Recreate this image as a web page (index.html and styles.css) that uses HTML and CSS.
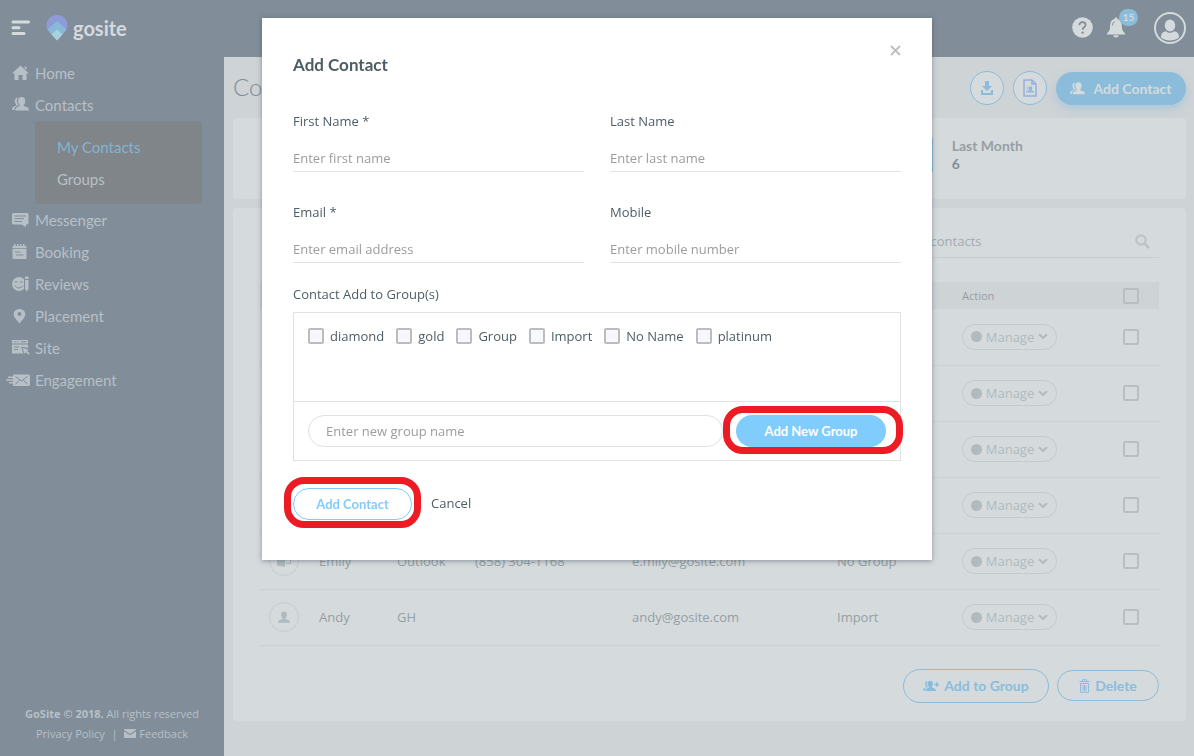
FILE: index.html
```
<!DOCTYPE html>
<html lang="en">
<head>
    <meta charset="UTF-8">
    <meta name="viewport" content="width=device-width, initial-scale=1.0">
    <title>GoSite - Contacts</title>
    <link rel="stylesheet" href="styles.css">
</head>
<body>
    <!-- Shared icons -->
    <svg class="sprite" aria-hidden="true">
        <symbol id="people" viewBox="0 0 17 14">
            <path d="M6 0.6C3.400 0.600 2.600 2.500 2.900 4.600C3 6 3.600 7 4.300 7.800V8.600L1.500 9.800C0.500 10.300 0 11.400 0 13H2.300C2.400 11 3.200 9.700 4.800 9L6.600 8.200C4.500 5.600 4.200 2.600 6 0.600Z"/>
            <path d="M9.600 0C12.300 0 13.400 2 13.200 4.300C13.100 5.900 12.500 7.200 11.700 8V9L15.300 10.300C16.400 10.800 17 12 17 13.500H3.200C3.200 12 3.700 10.800 4.800 10.300L7.700 9V8C6.800 7.200 6.200 5.900 6.100 4.300C5.900 2 7 0 9.600 0Z"/>
        </symbol>
        <symbol id="person" viewBox="0 0 14 14">
            <path d="M7 0C9.400 0 10.500 1.800 10.400 4C10.300 6 9.500 7.300 8.600 7.900V8.800L12 9.900C13.300 10.400 14 11.500 14 13.200H0C0 11.500 0.700 10.400 2 9.900L5.400 8.800V7.900C4.500 7.300 3.700 6 3.600 4C3.500 1.800 4.600 0 7 0Z"/>
        </symbol>
        <symbol id="chevron" viewBox="0 0 10 7">
            <path d="M1 1.300L5 5L9 1.300" fill="none" stroke="currentColor" stroke-width="2"/>
        </symbol>
    </svg>

    <header class="topbar">
        <button type="button" class="icon-button" aria-label="Menu">
            <svg width="20" height="16" viewBox="0 0 20 16"><path d="M2 2H17.500M2 7.800H8M2 13.600H13" stroke="currentColor" stroke-width="3" stroke-linecap="round"/></svg>
        </button>
        <a href="#" class="logo">
            <svg width="22" height="26" viewBox="0 0 22 26">
                <path d="M11 0C5 0 0.500 4.600 0.500 10.300C0.500 13.200 1.500 15 3.200 17L11 25.500L18.800 17C20.500 15 21.500 13.200 21.500 10.300C21.500 4.600 17 0 11 0Z" fill="#8f9ad9"/>
                <path d="M11 6L1.500 14.500L11 25.500L20.500 14.500Z" fill="#89b9da"/>
                <path d="M11 14.500L5.500 19.500L11 25.500L16.500 19.500Z" fill="#a7d2da"/>
            </svg>
            <span>gosite</span>
        </a>
        <div class="topbar-tools">
            <button type="button" class="icon-button" aria-label="Help">
                <svg width="21" height="21" viewBox="0 0 21 21"><circle cx="10.500" cy="10.500" r="10.300" fill="currentColor"/><path d="M7.400 8.200C7.400 6.300 8.700 5.200 10.500 5.200S13.600 6.300 13.600 8C13.600 10.300 10.600 10.300 10.600 12.800" fill="none" stroke="#818d99" stroke-width="1.700"/><circle cx="10.600" cy="15.600" r="1.200" fill="#818d99"/></svg>
            </button>
            <button type="button" class="icon-button bell" aria-label="Notifications">
                <svg width="18" height="21" viewBox="0 0 18 21"><path d="M9 0.500C9.900 0.500 10.500 1.100 10.500 2C13.300 2.600 14.700 4.900 14.800 8C14.900 12.500 15.600 14.500 18 16.200V17.500H0V16.200C2.400 14.500 3.100 12.500 3.200 8C3.300 4.900 4.700 2.600 7.500 2C7.500 1.100 8.100 0.500 9 0.500Z" fill="currentColor"/><path d="M6.300 18.300H11.700C11.400 19.800 10.400 20.500 9 20.500S6.600 19.800 6.300 18.300Z" fill="currentColor"/><path d="M5.400 8.500C5.500 6.500 6.300 5.200 7.800 4.600" fill="none" stroke="#818d99"/></svg>
                <span class="badge">15</span>
            </button>
            <button type="button" class="icon-button" aria-label="Account">
                <svg width="32" height="32" viewBox="0 0 32 32"><circle cx="16" cy="16" r="15" fill="none" stroke="currentColor" stroke-width="2"/><ellipse cx="16" cy="13.500" rx="5.200" ry="6" fill="currentColor"/><path d="M7 25.500C7 21.500 8.500 19.800 12 19.200C14.500 21.300 17.500 21.300 20 19.200C23.500 19.800 25 21.500 25 25.500C20.500 29.500 11.500 29.500 7 25.500Z" fill="currentColor"/></svg>
            </button>
        </div>
    </header>

    <div class="layout">
        <aside class="sidebar">
            <nav>
                <a href="#" class="nav-link">
                    <svg viewBox="0 0 24 18"><path d="M14.500 1.500L23 9.500H20.500V16H16.500V11H12.500V16H8.500V9.500H6L14.500 1.500ZM18.500 2.500H20.500V6L18.500 4Z"/></svg>
                    Home
                </a>
                <a href="#" class="nav-link">
                    <svg viewBox="0 0 24 18"><use href="#people" x="6" y="1" width="17" height="14"/></svg>
                    Contacts
                </a>
                <div class="submenu">
                    <a href="#" class="active">My Contacts</a>
                    <a href="#">Groups</a>
                </div>
                <a href="#" class="nav-link">
                    <svg viewBox="0 0 24 18"><path d="M7.500 2H21Q22.500 2 22.500 3.500V12Q22.500 13.500 21 13.500H20V16L15.500 13.500H7.500Q6 13.500 6 12V3.500Q6 2 7.500 2Z"/><path class="cut" d="M8.500 5H20M8.500 7.700H18M8.500 10.500H16"/></svg>
                    Messenger
                </a>
                <a href="#" class="nav-link">
                    <svg viewBox="0 0 24 18"><path d="M6.500 3H8V1H9.500V3H11V1H12.500V3H14V1H15.500V3H17V1H18.500V3H20.500V5H6.500ZM6.500 5.700H20.500V15Q20.500 16 19.500 16H7.500Q6.500 16 6.500 15Z"/><path class="cut" d="M9 9H14.500M10 12H17.500"/></svg>
                    Booking
                </a>
                <a href="#" class="nav-link">
                    <svg viewBox="0 0 24 18"><circle cx="13" cy="9" r="7"/><path class="cut" d="M8.500 7.200L10.500 6.700L11.500 7.300M14 7.300L15.500 6.700L17 7.200M9 10.500C10.500 13.800 15 13.800 17 10.500M18.500 3V15"/><path d="M19 1.500H22.500V4H19ZM19 5H22.500V14L20.800 16.500L19 14Z"/></svg>
                    Reviews
                </a>
                <a href="#" class="nav-link">
                    <svg viewBox="0 0 24 18"><path fill-rule="evenodd" d="M13.500 2C10 2 7.700 4.400 7.700 7.300C7.700 10.500 10.500 12.500 13.500 16.500C16.500 12.500 19.300 10.500 19.300 7.300C19.300 4.400 17 2 13.500 2ZM13.500 5A2 2 0 1 1 13.500 9A2 2 0 1 1 13.500 5Z"/></svg>
                    Placement
                </a>
                <a href="#" class="nav-link">
                    <svg viewBox="0 0 24 18"><path d="M6 1H22V4.500H6ZM6 5.500H22V9L15 7.500L17.500 14.500H6ZM16.500 8.700L23 11L21 12L23.700 14.500L22.500 15.800L20 13.200L18.700 15Z"/><path class="cut" d="M8 2.800H9.500M11 2.800H12.500M15 2.800H20.500M8 8H13M8 10.500H12"/></svg>
                    Site
                </a>
                <a href="#" class="nav-link">
                    <svg viewBox="0 0 24 18"><path d="M8 3.500H22.500Q24 3.500 24 5V13.500Q24 15 22.500 15H8Q7 15 7 14V12.500H3V11H7V9.800H0V8.300H7V7H2V5.500H7V4.500Q7 3.500 8 3.500Z"/><path class="cut" d="M9.500 5.500L15.500 10L21.500 5.500M9.500 13L13.500 9.500M21.500 13L17.500 9.500"/></svg>
                    Engagement
                </a>
            </nav>
            <footer>
                <p><strong>GoSite © 2018.</strong> All rights reserved</p>
                <p>
                    <a href="#">Privacy Policy</a>
                    <span class="divider">|</span>
                    <a href="#"><svg width="12" height="9" viewBox="0 0 12 9"><path fill="currentColor" d="M1 0H11Q12 0 12 1L6 5L0 1Q0 0 1 0ZM0 2.300L6 6.300L12 2.300V8Q12 9 11 9H1Q0 9 0 8Z"/></svg> Feedback</a>
                </p>
            </footer>
        </aside>

        <main class="content">
            <div class="page-head">
                <h1>Contacts</h1>
                <button type="button" class="round-button" aria-label="Download">
                    <svg width="12" height="14" viewBox="0 0 12 14"><path fill="currentColor" d="M4 0H8V5H11L6 10L1 5H4ZM0 9H2V12H10V9H12V14H0Z"/></svg>
                </button>
                <button type="button" class="round-button" aria-label="Export contacts">
                    <svg width="14" height="18" viewBox="0 0 14 18"><path d="M1 1H9L13 5V17H1ZM9 1V5H13" fill="none" stroke="#95b0dc" stroke-width="1.500"/><use href="#people" x="3" y="7" width="8" height="7"/></svg>
                </button>
                <button type="button" class="primary-button">
                    <svg width="15" height="13"><use href="#people"/></svg>
                    Add Contact
                </button>
            </div>

            <section class="card stats">
                <div class="stat">
                    <h2>Last Month</h2>
                    <strong>6</strong>
                </div>
            </section>

            <section class="card list">
                <label class="search">
                    <input type="text" placeholder="Search contacts" aria-label="Search contacts">
                    <svg width="15" height="15" viewBox="0 0 15 15"><circle cx="6" cy="6" r="4.700" fill="none" stroke="currentColor" stroke-width="2.200"/><path d="M9.500 9.500L14 14" stroke="currentColor" stroke-width="2.500"/></svg>
                </label>
                <table>
                    <colgroup>
                        <col class="col-source"><col class="col-name"><col class="col-name"><col class="col-phone">
                        <col><col class="col-group"><col class="col-action"><col class="col-check">
                    </colgroup>
                    <thead>
                        <tr>
                            <th></th><th></th><th></th><th></th><th></th><th></th>
                            <th>Action</th>
                            <th class="check"><input type="checkbox" aria-label="Select all"></th>
                        </tr>
                    </thead>
                    <tbody>
                        <tr>
                            <td></td><td></td><td></td><td></td><td></td><td></td>
                            <td><button type="button" class="manage"><i></i>Manage<svg width="10" height="7"><use href="#chevron"/></svg></button></td>
                            <td class="check"><input type="checkbox" aria-label="Select contact"></td>
                        </tr>
                        <tr>
                            <td></td><td></td><td></td><td></td><td></td><td></td>
                            <td><button type="button" class="manage"><i></i>Manage<svg width="10" height="7"><use href="#chevron"/></svg></button></td>
                            <td class="check"><input type="checkbox" aria-label="Select contact"></td>
                        </tr>
                        <tr>
                            <td></td><td></td><td></td><td></td><td></td><td></td>
                            <td><button type="button" class="manage"><i></i>Manage<svg width="10" height="7"><use href="#chevron"/></svg></button></td>
                            <td class="check"><input type="checkbox" aria-label="Select contact"></td>
                        </tr>
                        <tr>
                            <td></td><td></td><td></td><td></td><td></td><td></td>
                            <td><button type="button" class="manage"><i></i>Manage<svg width="10" height="7"><use href="#chevron"/></svg></button></td>
                            <td class="check"><input type="checkbox" aria-label="Select contact"></td>
                        </tr>
                        <tr>
                            <td><span class="source"><svg width="14" height="12" viewBox="0 0 14 12"><path d="M0 1L8 0V12L0 10.500ZM9 3H14V9H9V8H13V4H9Z"/></svg></span></td>
                            <td>Emily</td>
                            <td>Outlook</td>
                            <td>(858) 304-1168</td>
                            <td>e.mily@gosite.com</td>
                            <td>No Group</td>
                            <td><button type="button" class="manage"><i></i>Manage<svg width="10" height="7"><use href="#chevron"/></svg></button></td>
                            <td class="check"><input type="checkbox" aria-label="Select Emily"></td>
                        </tr>
                        <tr>
                            <td><span class="source"><svg width="12" height="13"><use href="#person"/></svg></span></td>
                            <td>Andy</td>
                            <td>GH</td>
                            <td></td>
                            <td>andy@gosite.com</td>
                            <td>Import</td>
                            <td><button type="button" class="manage"><i></i>Manage<svg width="10" height="7"><use href="#chevron"/></svg></button></td>
                            <td class="check"><input type="checkbox" aria-label="Select Andy"></td>
                        </tr>
                    </tbody>
                </table>
                <div class="list-actions">
                    <button type="button" class="add-to-group">
                        <svg width="16" height="12" viewBox="0 0 16 12"><use href="#people" x="0" y="0" width="13" height="12"/><path d="M11.500 4.500H16M13.700 2.300V6.700" stroke="currentColor" stroke-width="1.500"/></svg>
                        Add to Group
                    </button>
                    <button type="button" class="delete">
                        <svg width="11" height="14" viewBox="0 0 11 14"><path d="M0.500 2.500H10.500M3.500 2.500V0.700H7.500V2.500M1.500 4.500H9.500V13.300H1.500ZM4 6V12M5.500 6V12M7 6V12" fill="none" stroke="currentColor"/></svg>
                        Delete
                    </button>
                </div>
            </section>
        </main>
    </div>

    <!-- Add contact dialog -->
    <div class="overlay">
        <form class="modal" role="dialog" aria-labelledby="modal-title">
            <div class="modal-head">
                <h2 id="modal-title">Add Contact</h2>
                <button type="button" class="close" aria-label="Close">
                    <svg width="11" height="11" viewBox="0 0 11 11"><path d="M1 1L10 10M10 1L1 10" stroke="currentColor" stroke-width="2"/></svg>
                </button>
            </div>
            <div class="fields">
                <div class="field">
                    <label for="first-name">First Name *</label>
                    <input type="text" id="first-name" placeholder="Enter first name">
                </div>
                <div class="field">
                    <label for="last-name">Last Name</label>
                    <input type="text" id="last-name" placeholder="Enter last name">
                </div>
                <div class="field">
                    <label for="email">Email *</label>
                    <input type="email" id="email" placeholder="Enter email address">
                </div>
                <div class="field">
                    <label for="mobile">Mobile</label>
                    <input type="tel" id="mobile" placeholder="Enter mobile number">
                </div>
            </div>
            <p class="groups-title">Contact Add to Group(s)</p>
            <div class="groups">
                <div class="group-list">
                    <label><input type="checkbox">diamond</label>
                    <label><input type="checkbox">gold</label>
                    <label><input type="checkbox">Group</label>
                    <label><input type="checkbox">Import</label>
                    <label><input type="checkbox">No Name</label>
                    <label><input type="checkbox">platinum</label>
                </div>
                <div class="new-group">
                    <input type="text" placeholder="Enter new group name" aria-label="New group name">
                    <div class="highlight highlight-group">
                        <button type="button" class="new-group-button">Add New Group</button>
                    </div>
                </div>
            </div>
            <div class="modal-actions">
                <div class="highlight highlight-submit">
                    <button type="submit" class="submit-button">Add Contact</button>
                </div>
                <a href="#">Cancel</a>
            </div>
        </form>
    </div>
</body>
</html>
```
FILE: styles.css
```
/* Global Styles */
* {
    margin: 0;
    padding: 0;
    box-sizing: border-box;
}

body {
    font-family: "Open Sans", sans-serif;
    font-size: 13px;
    background-color: #ced3d6;
    color: #969fa4;
    display: flex;
    flex-direction: column;
    min-height: 100vh;
}

button,
input {
    font: inherit;
    color: inherit;
}

button {
    background: none;
    border: none;
    cursor: pointer;
}

a {
    color: inherit;
    text-decoration: none;
}

svg {
    flex: none;
    fill: currentColor;
}

.sprite {
    position: absolute;
    width: 0;
    height: 0;
}

input[type="checkbox"] {
    appearance: none;
    flex: none;
    width: 16px;
    height: 16px;
    border: 2px solid #b8bec2;
    border-radius: 2px;
}

/* Top bar */
.topbar {
    display: flex;
    align-items: center;
    height: 57px;
    padding: 0 8px 2px 11px;
    background-color: #818d99;
    color: #d5dadd;
}

.icon-button {
    display: flex;
    position: relative;
}

.logo {
    display: flex;
    align-items: center;
    gap: 5px;
    margin-left: 15px;
    font-family: Lato, sans-serif;
    font-size: 20px;
    font-weight: bold;
    line-height: 22px;
}

.topbar-tools {
    display: flex;
    align-items: center;
    margin-left: auto;
}

.bell {
    margin: 0 29px 0 14px;
}

.badge {
    position: absolute;
    left: 12px;
    top: -8px;
    width: 19px;
    border-radius: 9px;
    background-color: #8bbddb;
    font-family: Lato, sans-serif;
    font-size: 10px;
    font-weight: bold;
    line-height: 17px;
}

/* Sidebar */
.layout {
    display: flex;
    flex: 1;
}

.sidebar {
    display: flex;
    flex-direction: column;
    flex: none;
    width: 224px;
    background-color: #818d99;
    color: #b7c0c7;
}

.sidebar nav {
    font-family: Lato, sans-serif;
    font-size: 15px;
    line-height: 32px;
}

.nav-link {
    display: flex;
    align-items: center;
    gap: 5px;
    padding-left: 6px;
}

.nav-link svg {
    width: 24px;
    height: 18px;
}

.nav-link .cut {
    fill: none;
    stroke: #818d99;
}

.submenu {
    margin: 0 22px 0 35px;
    padding: 10px 22px 9px;
    border-radius: 4px;
    background-color: #7f8588;
}

.submenu a {
    display: block;
}

.submenu .active {
    color: #85b4d1;
}

.sidebar footer {
    margin-top: auto;
    padding-bottom: 12px;
    font-size: 11px;
    line-height: 20px;
    text-align: center;
}

.divider {
    margin: 0 4px;
}

/* Page content */
.content {
    flex: 1;
    min-width: 0;
    padding: 14px 8px 35px 9px;
}

.page-head {
    display: flex;
    align-items: center;
    gap: 9px;
    height: 34px;
    margin-bottom: 13px;
}

.page-head h1 {
    margin-right: auto;
    padding-bottom: 4px;
    font-family: Lato, sans-serif;
    font-size: 24px;
    font-weight: 300;
    color: #818d99;
}

.round-button {
    display: flex;
    align-items: center;
    justify-content: center;
    width: 34px;
    height: 34px;
    border: 1px solid #8bbddb;
    border-radius: 50%;
    background-color: #d5dadd;
    color: #8bbddb;
}

.primary-button {
    display: flex;
    align-items: center;
    justify-content: center;
    gap: 8px;
    width: 130px;
    height: 33px;
    border-radius: 17px;
    background-color: #8bbddb;
    box-shadow: 0 4px 8px rgba(139, 189, 219, 0.5);
    color: #d5dadd;
    font-family: Lato, sans-serif;
    font-size: 14px;
    font-weight: bold;
}

.card {
    border-radius: 4px;
    background-color: #d5dadd;
}

.stats {
    display: flex;
    align-items: flex-start;
    height: 81px;
    margin-bottom: 9px;
    padding-top: 20px;
}

.stat {
    width: 27%;
    margin-left: auto;
    padding-left: 19px;
    border-left: 4px solid #8bbddb;
    font-family: Lato, sans-serif;
    line-height: 16px;
}

.stat h2 {
    font-size: 14px;
}

.stat strong {
    display: block;
    padding-top: 2px;
    font-size: 14px;
    color: #818d99;
}

/* Contact list */
.list {
    padding: 17px 27px 18px;
}

.search {
    display: flex;
    align-items: center;
    width: 300px;
    height: 33px;
    margin: 0 0 24px auto;
    padding-right: 9px;
    border-bottom: 1px solid #c8cdd0;
    color: #bcc3c7;
}

.search input {
    flex: 1;
    min-width: 0;
    padding-left: 27px;
    border: none;
    outline: none;
    background: none;
}

.search input::placeholder {
    color: #a3abaf;
}

table {
    width: 100%;
    border-collapse: collapse;
    table-layout: fixed;
}

.col-source {
    width: 59px;
}

.col-name {
    width: 78px;
}

.col-phone {
    width: 157px;
}

.col-group {
    width: 125px;
}

.col-action {
    width: 141px;
}

.col-check {
    width: 56px;
}

th {
    height: 27px;
    background-color: #ced3d6;
    font-size: 11px;
    font-weight: normal;
    text-align: left;
}

td {
    height: 56px;
    border-bottom: 1px solid #cbd1d4;
}

.check input {
    display: block;
    margin: 0 auto;
}

.source {
    display: flex;
    align-items: center;
    justify-content: center;
    width: 30px;
    height: 30px;
    margin-left: 9px;
    border: 1px solid #c4cacd;
    border-radius: 50%;
    color: #b0babf;
}

.manage {
    display: flex;
    align-items: center;
    justify-content: center;
    gap: 4px;
    width: 95px;
    height: 26px;
    border: 1px solid #c4cacd;
    border-radius: 13px;
    color: #b0babf;
}

.manage i {
    width: 11px;
    height: 11px;
    border-radius: 50%;
    background-color: #b0babf;
}

.list-actions {
    display: flex;
    align-items: center;
    justify-content: flex-end;
    gap: 8px;
    margin-top: 23px;
    color: #8bbddb;
    font-family: Lato, sans-serif;
    font-size: 14px;
    font-weight: bold;
}

.list-actions button {
    display: flex;
    align-items: center;
    justify-content: center;
    gap: 5px;
    border: 1px solid #8bbddb;
    border-radius: 17px;
}

.add-to-group {
    width: 146px;
    height: 34px;
}

.delete {
    width: 102px;
    height: 31px;
}

/* Modal */
.overlay {
    position: fixed;
    inset: 0;
    padding: 18px 20px;
    overflow-y: auto;
}

.modal {
    max-width: 670px;
    margin: 0 auto;
    padding: 27px 31px 40px;
    background-color: #fff;
    box-shadow: 0 1px 5px rgba(60, 75, 85, 0.5);
    color: #4d5d66;
    line-height: 20px;
}

.modal ::placeholder {
    color: #9c9c9c;
    opacity: 1;
}

.modal-head {
    display: flex;
    align-items: flex-start;
    justify-content: space-between;
    margin-bottom: 36px;
}

.modal-head h2 {
    padding-top: 10px;
    font-family: Lato, sans-serif;
    font-size: 17px;
    line-height: 20px;
}

.close {
    display: flex;
    color: #c0c0c0;
}

.fields {
    display: grid;
    grid-template-columns: 1fr 1fr;
    gap: 30px 26px;
}

.field label {
    display: block;
    line-height: 20px;
}

.field input {
    display: block;
    width: 100%;
    height: 41px;
    padding-top: 14px;
    border: none;
    border-bottom: 1px solid #dfe2e7;
    outline: none;
}

.groups-title {
    margin-top: 21px;
}

.groups {
    margin-top: 8px;
    border: 1px solid #dfe2e7;
}

.group-list {
    display: flex;
    flex-wrap: wrap;
    align-content: flex-start;
    gap: 8px 12px;
    height: 89px;
    padding: 13px 14px;
    border-bottom: 1px solid #dfe2e7;
}

.group-list label {
    display: flex;
    align-items: center;
    gap: 6px;
}

.group-list input {
    border-color: #bdbdbd;
    background-color: #f7f8fc;
}

.new-group {
    display: flex;
    gap: 13px;
    padding: 13px 14px;
}

.new-group input {
    flex: 1;
    min-width: 0;
    height: 32px;
    padding: 0 17px;
    border: 1px solid #e0e2e6;
    border-radius: 16px;
    outline: none;
}

.new-group-button,
.submit-button {
    height: 32px;
    border-radius: 16px;
    font-family: Lato, sans-serif;
    font-weight: bold;
}

.new-group-button {
    width: 150px;
    background-color: #80cdfd;
    color: #fff;
}

.submit-button {
    width: 119px;
    border: 1px solid #80cdfd;
    color: #80cdfd;
}

.modal-actions {
    display: flex;
    align-items: flex-start;
    gap: 19px;
    margin-top: 27px;
    line-height: 30px;
}

/* Red outline drawn round the buttons to press */
.highlight {
    position: relative;
    display: flex;
}

.highlight::after {
    content: "";
    position: absolute;
    border: 7px solid #ed1c24;
    border-radius: 20px;
    pointer-events: none;
}

.highlight-group::after {
    inset: -9px -17px -7px -13px;
}

.highlight-submit::after {
    inset: -11px -9px -8px;
}
```
